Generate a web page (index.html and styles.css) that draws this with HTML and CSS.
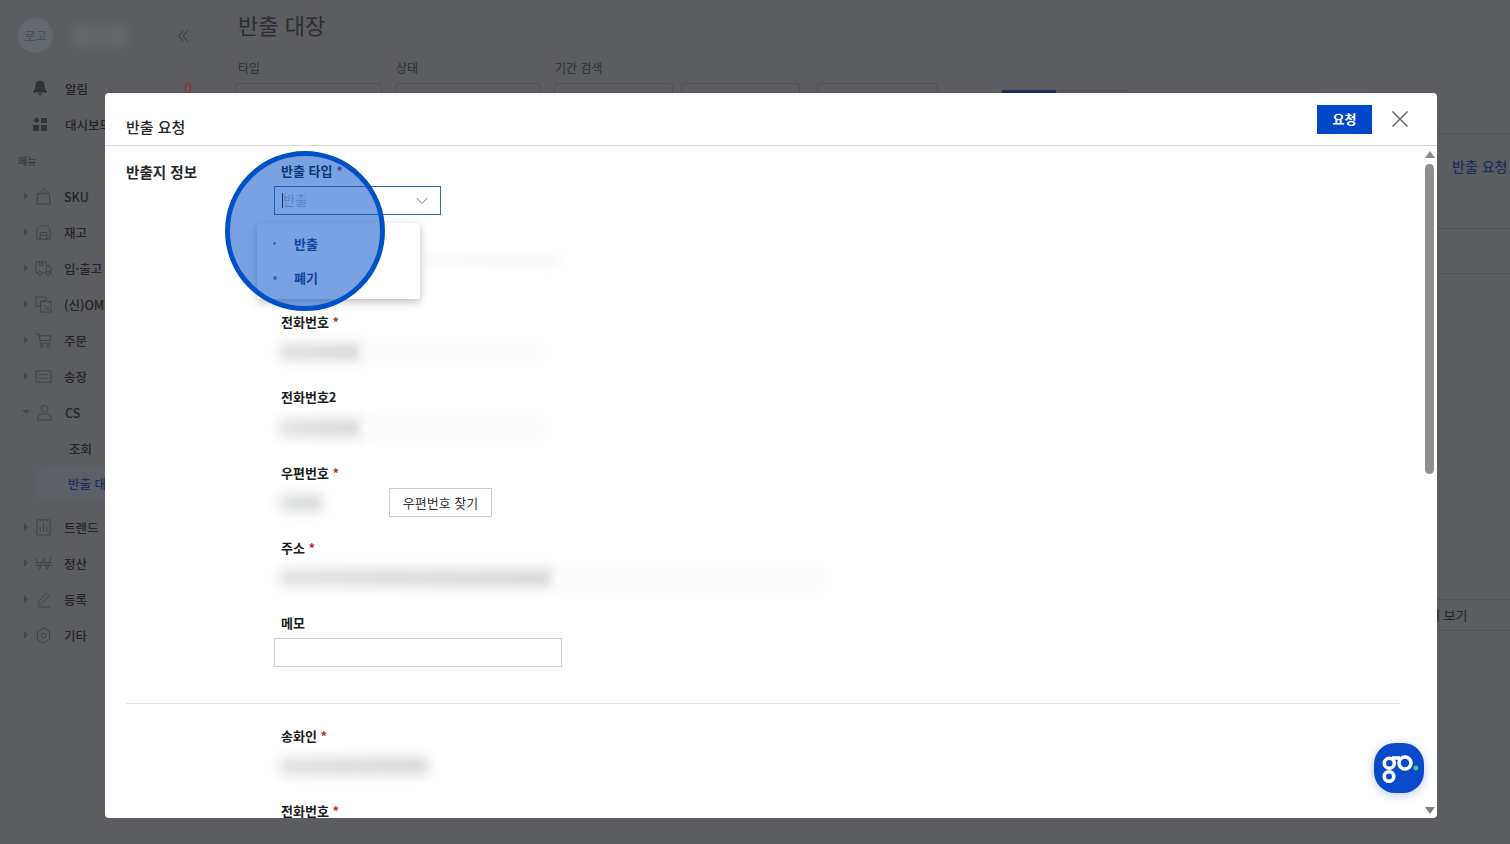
FILE: index.html
```html
<!DOCTYPE html>
<html lang="ko">
<head>
  <meta charset="UTF-8" />
  <title>반출 대장</title>
  <link rel="stylesheet" href="styles.css">
</head>
<body>
  <div class="page">
    <aside class="sidebar">
      <div class="brand">
        <span class="brand-logo">로고</span>
        <span class="brand-name"></span>
        <svg class="collapse" width="12" height="12" viewBox="0 0 12 12"><path d="M6 1 1.5 6 6 11M10.5 1 6 6l4.5 5" fill="none" stroke="#3f4247" stroke-width="1.2"/></svg>
      </div>
      <div class="top-item">
        <svg width="18" height="18" viewBox="0 0 18 18"><path d="M9 1.5c-3 0-4.6 2.2-4.6 5 0 3-1 4.3-2.4 5.7v1.3h14v-1.3c-1.4-1.4-2.4-2.7-2.4-5.7 0-2.8-1.6-5-4.6-5zM7 14.5a2 2 0 0 0 4 0z" fill="#313337"/></svg>
        <span>알림</span><b class="count">0</b>
      </div>
      <div class="top-item">
        <svg width="18" height="18" viewBox="0 0 18 18" fill="#313337"><path d="M5.5 2 8.5 5.5 5.5 8 2.5 5.5z"/><rect x="10" y="3" width="6" height="5"/><rect x="2" y="10" width="6" height="6"/><rect x="10" y="10" width="6" height="6"/></svg>
        <span>대시보드</span>
      </div>
      <div class="menu-title">메뉴</div>
      <ul class="menu">
        <li><i class="caret"></i><svg class="ico" viewBox="0 0 18 18"><path d="M3 6h12l1 11H2zM6.5 6V4c0-3.5 5-3.5 5 0v2"/></svg>SKU</li>
        <li><i class="caret"></i><svg class="ico" viewBox="0 0 18 18"><path d="M2 16V7c0-3 3-5.5 7-5.5s7 2.5 7 5.5v9zM5.5 16V9h7v7M5.5 12h7"/></svg>재고</li>
        <li><i class="caret"></i><svg class="ico" viewBox="0 0 18 18"><path d="M1 13V2h11v11M12 6h3l2 3v4h-2M5 2v4h3V2M1 13h2M7 13h5"/><circle cx="5" cy="14" r="2"/><circle cx="14" cy="14" r="2"/></svg>입·출고</li>
        <li><i class="caret"></i><svg class="ico" viewBox="0 0 18 18"><path d="M1 1h11v4H6v6H1zM6 6h11v11H6zM9 9l5 5M14 11v3h-3"/></svg>(신)OMS</li>
        <li><i class="caret"></i><svg class="ico" viewBox="0 0 18 18"><path d="M1 2h3l2 10h10M4.5 4H17l-1 5H5.5"/><circle cx="7" cy="15" r="1.5"/><circle cx="14" cy="15" r="1.5"/></svg>주문</li>
        <li><i class="caret"></i><svg class="ico" viewBox="0 0 18 18"><path d="M1 3h16v12H1zM4 7h10M4 11h10"/></svg>송장</li>
        <li><i class="caret open"></i><svg class="ico" viewBox="0 0 18 18"><circle cx="9" cy="5" r="3.5"/><path d="M2 17v-3c0-2 2-3.5 4-3.5h6c2 0 4 1.5 4 3.5v3z"/></svg>CS</li>
        <li class="sub">조회</li>
        <li class="sub current">반출 대장</li>
        <li><i class="caret"></i><svg class="ico" viewBox="0 0 18 18"><path d="M2 1h14v16H2zM5.5 14V9M9 14V5M12.5 14V8"/></svg>트렌드</li>
        <li><i class="caret"></i><svg class="ico" viewBox="0 0 18 18"><path d="M1 3l4 12 4-12 4 12 4-12M0 8h18M0 11h18"/></svg>정산</li>
        <li><i class="caret"></i><svg class="ico" viewBox="0 0 18 18"><path d="M4 11 12 2l3 2.5-8 9-3.5 1zM2 17h14"/></svg>등록</li>
        <li><i class="caret"></i><svg class="ico" viewBox="0 0 18 18"><path d="M9 1l6.5 3.8v8.400L9 17l-6.500-3.800V4.800z"/><circle cx="9" cy="9" r="2.5"/></svg>기타</li>
      </ul>
    </aside>
    <main class="main">
      <h1>반출 대장</h1>
      <div class="filters">
        <div class="filter f-type"><label>타입</label><div class="box"></div></div>
        <div class="filter f-state"><label>상태</label><div class="box"></div></div>
        <div class="filter f-date"><label>기간 검색</label><div class="box"></div></div>
        <div class="filter f-date2"><div class="box"></div></div>
        <div class="filter f-date3"><div class="box"></div></div>
        <div class="filter-btns"><span class="btn-dark"></span><span class="btn-line"></span></div>
      </div>
      <div class="back-right">
        <div class="back-line first"><span class="back-request">반출 요청</span></div>
        <div class="back-line second"></div>
        <div class="back-line third"></div>
        <div class="back-line last">상세 보기</div>
      </div>
    </main>
  </div>

  <section class="modal">
    <header class="modal-head">
      <h2>반출 요청</h2>
      <button class="btn-request">요청</button>
      <svg class="close" width="18" height="18" viewBox="0 0 18 18"><path d="M1.5 1.5l15 15M16.5 1.5l-15 15" stroke="#666" stroke-width="1.5" fill="none"/></svg>
    </header>
    <div class="modal-body">
      <div class="form-area">
        <div class="form-group">
          <h3>반출지 정보</h3>
          <div class="fields">
            <div class="field">
              <label>반출 타입 <em>*</em></label>
              <div class="select"><span class="cursor"></span><span class="placeholder">반출</span>
                <svg width="12" height="8" viewBox="0 0 12 8"><path d="M.8 1l5.2 5.5L11.2 1" fill="none" stroke="#777" stroke-width="1"/></svg>
              </div>
            </div>
            <div class="field f-name">
              <div class="blur-row"><span class="smudge faint w-name"></span></div>
            </div>
            <div class="field">
              <label>전화번호 <em>*</em></label>
              <div class="blur-row"><span class="smudge w-phone"></span><span class="halo w-phone-halo"></span></div>
            </div>
            <div class="field">
              <label>전화번호2</label>
              <div class="blur-row"><span class="smudge w-phone"></span><span class="halo w-phone-halo"></span></div>
            </div>
            <div class="field">
              <label>우편번호 <em>*</em></label>
              <div class="blur-row"><span class="smudge w-zip"></span><button class="btn-zip">우편번호 찾기</button></div>
            </div>
            <div class="field">
              <label>주소 <em>*</em></label>
              <div class="blur-row"><span class="smudge w-addr"></span><span class="halo w-addr-halo"></span></div>
            </div>
            <div class="field">
              <label>메모</label>
              <div class="memo"></div>
            </div>
          </div>
        </div>
        <hr class="divider">
        <div class="form-group second">
          <div class="fields">
            <div class="field">
              <label>송화인 <em>*</em></label>
              <div class="blur-row"><span class="smudge w-sender"></span></div>
            </div>
            <div class="field">
              <label>전화번호 <em>*</em></label>
            </div>
          </div>
        </div>
      </div>
      <div class="scrollbar">
        <i class="arrow up"></i>
        <div class="thumb"></div>
        <i class="arrow down"></i>
      </div>
    </div>

    <!-- 반출 타입 드롭다운 -->
    <ul class="dropdown">
      <li>반출</li>
      <li>폐기</li>
    </ul>
    <!-- 강조 표시 원 -->
    <div class="highlight"></div>

    <div class="go-badge">
      <svg width="50" height="50" viewBox="0 0 50 50">
        <g fill="none" stroke="#fff" stroke-width="3.6">
          <circle cx="15.3" cy="20.3" r="5"/>
          <circle cx="15" cy="33.5" r="4.8"/>
          <circle cx="31" cy="20" r="6"/>
          <path d="M18 15h8"/>
        </g>
        <circle cx="42" cy="25" r="2.4" fill="#3ecf8e"/>
      </svg>
    </div>
  </section>
</body>
</html>
```

FILE: styles.css
```css
* {
  margin: 0;
  padding: 0;
  box-sizing: border-box;
  font-family: "Noto Sans CJK KR", "Noto Sans", sans-serif;
}

html, body {
  width: 1510px;
  height: 844px;
  overflow: hidden;
}

body {
  background-color: #5b5d60;
  color: #222428;
}

.page {
  display: flex;
  height: 844px;
}

/* sidebar, behind the dim */
.sidebar {
  width: 222px;
  flex: none;
  padding: 18px 0 0 18px;
  font-size: 12.5px;
  font-weight: 500;
}

.brand {
  display: flex;
  align-items: center;
  height: 35px;
  margin-bottom: 17px;
}

.brand-logo {
  width: 35px;
  height: 35px;
  border-radius: 50%;
  background-color: #62686e;
  color: #47505c;
  text-align: center;
  line-height: 35px;
  font-size: 12px;
}

.brand-name {
  width: 58px;
  height: 24px;
  margin-left: 18px;
  border-radius: 8px;
  background-color: #63656a;
  filter: blur(4px);
}

.collapse {
  margin-left: 48px;
}

.top-item {
  display: flex;
  align-items: center;
  height: 36px;
  padding-left: 13px;
}

.top-item span {
  margin-left: 16px;
}

.count {
  margin-left: 92px;
  padding: 0 4px;
  border-radius: 50%;
  background-color: #625a5c;
  color: #7a3a3c;
  font-weight: 500;
  font-size: 14px;
}

.menu-title {
  margin: 11px 0 9px;
  font-size: 10px;
  height: 16px;
  line-height: 16px;
  color: #34363a;
}

.menu {
  list-style: none;
}

.menu li {
  display: flex;
  align-items: center;
  height: 36px;
  white-space: nowrap;
}

.caret {
  width: 0;
  height: 0;
  margin: 0 7px 0 6px;
  border-left: 4px solid #44474b;
  border-top: 4px solid transparent;
  border-bottom: 4px solid transparent;
}

.caret.open {
  margin: 0 6px 0 4px;
  border-top: 4px solid #44474b;
  border-left: 4px solid transparent;
  border-right: 4px solid transparent;
  border-bottom: 0;
}

.ico {
  width: 17px;
  height: 17px;
  margin-right: 12px;
  fill: none;
  stroke: #3f4246;
  stroke-width: 1;
}

.menu li.sub {
  padding-left: 51px;
}

.menu li.current {
  height: 35px;
  margin: 0 0 8px 19px;
  padding-left: 31px;
  border-radius: 6px;
  background-color: #5d6067;
  color: #1f2d5a;
}

/* page content, behind the dim */
.main {
  flex: 1;
  padding: 7px 0 0 13px;
}

.main h1 {
  padding-left: 3px;
  font-size: 22px;
  font-weight: 400;
  line-height: 34px;
  color: #2b2d31;
}

.filters {
  display: flex;
  margin-top: 19px;
}

.filter label {
  display: block;
  font-size: 12px;
  line-height: 16px;
  height: 16px;
  color: #2c2e32;
}

.box {
  margin-top: 7px;
  height: 20px;
  border: 1px solid #505256;
  border-radius: 3px;
}

.f-type { width: 147px; }
.f-type label { padding-left: 3px; }
.f-state { width: 144px; margin-left: 14px; }
.f-date { width: 119px; margin-left: 14px; }
.f-date label { padding-left: 1px; }
.f-date2 { width: 119px; margin-left: 8px; padding-top: 16px; }
.f-date3 { width: 121px; margin-left: 17px; padding-top: 16px; }

.filter-btns {
  display: flex;
  gap: 4px;
  margin: 30px 0 0 64px;
}

.btn-dark {
  width: 54px;
  height: 20px;
  background-color: #1d2c59;
}

.btn-line {
  width: 66px;
  height: 20px;
  border: 1px solid #505256;
}

.back-right {
  position: absolute;
  top: 133px;
  right: 0;
  width: 94px;
}

.back-line {
  border-top: 1px solid #505256;
}

.back-line.first {
  height: 95px;
  padding: 21px 0 0 36px;
}

.back-line.second {
  height: 45px;
}

.back-line.third {
  height: 326px;
}

.back-line.last {
  height: 32px;
  border-bottom: 1px solid #505256;
  line-height: 30px;
  font-size: 13px;
  white-space: nowrap;
}

.back-request {
  display: block;
  color: #1f2d5a;
  font-size: 14px;
  font-weight: 500;
  line-height: 22px;
  white-space: nowrap;
}

/* modal */
.modal {
  position: absolute;
  left: 105px;
  top: 93px;
  width: 1332px;
  height: 725px;
  background-color: #fff;
  border-radius: 4px;
  overflow: hidden;
}

.modal-head {
  display: flex;
  align-items: center;
  height: 53px;
  padding: 0 28px 0 21px;
  border-bottom: 1px solid #d8d8d8;
}

.modal-head h2 {
  flex: 1;
  font-size: 15px;
  font-weight: 500;
  padding-top: 15px;
  color: #26282c;
}

.btn-request {
  width: 55px;
  height: 29px;
  margin: 0 19px 0 0;
  padding-bottom: 2px;
  border: none;
  background-color: #0046c8;
  color: #fff;
  font-size: 13px;
  font-weight: 700;
}

.modal-body {
  display: flex;
  height: 672px;
}

.form-area {
  flex: 1;
  min-width: 0;
  padding: 0 0 0 21px;
  overflow: hidden;
}

.form-group {
  display: flex;
}

.form-group.second {
  padding-left: 148px;
}

.form-group h3 {
  width: 148px;
  flex: none;
  padding-top: 15px;
  font-size: 14.6px;
  font-weight: 700;
  color: #26282c;
}

.fields {
  flex: 1;
  padding-top: 15px;
}

.form-group.second .fields {
  padding-top: 22px;
}

.field {
  height: 75.4px;
}

.field label {
  display: block;
  padding-left: 7px;
  height: 20px;
  line-height: 20px;
  font-size: 13px;
  font-weight: 700;
  color: #1a1c20;
}

.field label em {
  color: #b5303a;
  font-style: normal;
}

.select {
  display: flex;
  align-items: center;
  width: 167px;
  height: 29px;
  margin-top: 5px;
  padding-left: 7px;
  border: 1px solid #35719f;
}

.select svg {
  margin-left: auto;
  margin-right: 12px;
}

.cursor {
  width: 1px;
  height: 15px;
  background-color: #222;
}

.placeholder {
  padding-bottom: 2px;
  font-size: 13px;
  color: #b9bdc3;
}

.blur-row {
  display: flex;
  align-items: center;
  height: 29px;
  margin-top: 5px;
}

.f-name {
  padding-top: 9px;
}

.f-name .blur-row {
  margin-top: 0;
}

.smudge {
  display: block;
  flex: none;
  height: 18px;
  margin: 2px 0 0 6px;
  background: linear-gradient(to right, #e0e2e2, #d6d8d8);
  filter: blur(6px);
}

.smudge.faint {
  height: 10px;
  opacity: .2;
}

.halo {
  display: block;
  height: 24px;
  margin-top: 2px;
  background-color: #fbfbfb;
  filter: blur(6px);
}

.w-name { width: 280px; }
.w-phone { width: 82px; }
.w-phone-halo { width: 180px; }
.w-zip { width: 42px; }
.w-addr { width: 274px; }
.w-addr-halo { width: 270px; }
.w-sender { width: 148px; }

.btn-zip {
  width: 103px;
  height: 29px;
  margin-left: 67px;
  background-color: #fff;
  border: 1px solid #ccc;
  font-size: 13px;
  color: #333;
}

.memo {
  width: 288px;
  height: 29px;
  margin-top: 5px;
  border: 1px solid #ccc;
}

.divider {
  width: 1274px;
  height: 1px;
  margin-top: 14px;
  border: 0;
  background-color: #e3e3e3;
}

.scrollbar {
  position: relative;
  width: 16px;
  flex: none;
}

.thumb {
  position: absolute;
  top: 18px;
  left: 4px;
  width: 9px;
  height: 310px;
  border-radius: 5px;
  background-color: #8f8f8f;
}

.arrow {
  position: absolute;
  left: 3.5px;
  width: 0;
  height: 0;
  border-left: 5px solid transparent;
  border-right: 5px solid transparent;
}

.arrow.up {
  top: 5px;
  border-bottom: 7px solid #8a8a8a;
}

.arrow.down {
  bottom: 4px;
  border-top: 7px solid #808080;
}

.dropdown {
  position: absolute;
  left: 152px;
  top: 130px;
  width: 163px;
  height: 76px;
  padding: 4px 0;
  list-style: none;
  background-color: #fff;
  border-radius: 3px;
  box-shadow: 0 3px 8px rgba(0, 0, 0, .25);
}

.dropdown li {
  position: relative;
  height: 34px;
  padding-left: 37px;
  line-height: 33px;
  font-size: 13px;
  font-weight: 700;
  color: #1f3a6e;
}

.dropdown li::before {
  content: "";
  position: absolute;
  left: 16px;
  top: 15px;
  width: 3px;
  height: 3px;
  border-radius: 50%;
  background-color: #6a86bb;
}

.dropdown li + li::before {
  width: 4px;
  height: 4px;
}

.highlight {
  position: absolute;
  left: 120px;
  top: 58px;
  width: 160px;
  height: 160px;
  border: 5px solid #0050c8;
  border-radius: 50%;
  background-color: rgba(0, 76, 200, .52);
}

.go-badge {
  position: absolute;
  left: 1269px;
  top: 650px;
  width: 50px;
  height: 50px;
  border-radius: 42%;
  background-color: #0a49c9;
  box-shadow: 0 2px 10px rgba(10, 73, 201, .3);
}
```
